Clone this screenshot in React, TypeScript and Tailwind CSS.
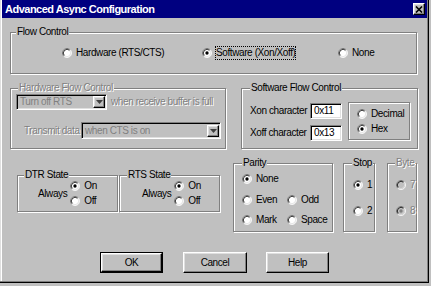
import React from 'react';

// Win95 style "Advanced Async Configuration" dialog

const disabledText = 'text-[#808080] [text-shadow:1px_1px_0_#ffffff]';
const sunken =
  'border border-t-[#808080] border-l-[#808080] border-r-white border-b-white shadow-[inset_1px_1px_0_#000000,inset_-1px_-1px_0_#dfdfdf]';
const raised =
  'border border-t-white border-l-white border-r-black border-b-black shadow-[inset_-1px_-1px_0_#808080,inset_1px_1px_0_#dfdfdf]';

function Radio({ checked = false, disabled = false }: { checked?: boolean; disabled?: boolean }) {
  return (
    <svg width="10" height="10" viewBox="0 0 12 12" className="shrink-0">
      <circle cx="6" cy="6" r="5" fill={disabled ? '#c0c0c0' : '#ffffff'} />
      <path d="M2.11 9.89A5.5 5.5 0 0 1 9.89 2.11" fill="none" stroke="#808080" />
      <path d="M9.89 2.11A5.5 5.5 0 0 1 2.11 9.89" fill="none" stroke="#ffffff" />
      <path d="M2.82 9.18A4.5 4.5 0 0 1 9.18 2.82" fill="none" stroke="#000000" />
      <path d="M9.18 2.82A4.5 4.5 0 0 1 2.82 9.18" fill="none" stroke="#dfdfdf" />
      {checked && <circle cx="6" cy="6" r="2" fill={disabled ? '#808080' : '#000000'} />}
    </svg>
  );
}

function Option({
  label,
  checked,
  disabled,
  focus,
  className = '',
}: {
  label: string;
  checked?: boolean;
  disabled?: boolean;
  focus?: boolean;
  className?: string;
}) {
  return (
    <div className={`flex items-center gap-[4px] h-[12px] ${className}`}>
      <Radio checked={checked} disabled={disabled} />
      <span
        className={`${disabled ? disabledText : ''} ${
          focus ? 'outline-1 outline-dotted outline-black outline-offset-0' : ''
        }`}
      >
        {label}
      </span>
    </div>
  );
}

function Group({
  label,
  labelClass = 'left-[5px]',
  disabled,
  className = '',
  children,
}: {
  label?: string;
  labelClass?: string;
  disabled?: boolean;
  className?: string;
  children?: React.ReactNode;
}) {
  return (
    <div
      className={`relative shrink-0 border border-[#808080] shadow-[inset_1px_1px_0_#ffffff,1px_1px_0_#ffffff] ${className}`}
    >
      {label && (
        <span
          className={`absolute -top-[7px] px-[1px] bg-[#c0c0c0] whitespace-nowrap ${labelClass} ${
            disabled ? disabledText : ''
          }`}
        >
          {label}
        </span>
      )}
      {children}
    </div>
  );
}

function Combo({ text, className = '' }: { text: string; className?: string }) {
  return (
    <div className={`flex items-center justify-between bg-[#c0c0c0] pr-[1px] ${sunken} ${className}`}>
      <span className="pl-[3px] text-[#808080] whitespace-nowrap">{text}</span>
      <span className={`flex items-center justify-center w-[12px] h-[12px] bg-[#c0c0c0] ${raised}`}>
        <svg width="7" height="4" viewBox="0 0 7 4">
          <path d="M0 0h7L3.5 4z" fill="#404040" />
        </svg>
      </span>
    </div>
  );
}

function Field({ value }: { value: string }) {
  return (
    <div className={`w-[32px] h-[16px] bg-white pl-[3px] leading-[14px] ${sunken}`}>{value}</div>
  );
}

function Button({ label, isDefault, className = '' }: { label: string; isDefault?: boolean; className?: string }) {
  const face = (
    <div className={`flex items-center justify-center w-full h-full bg-[#c0c0c0] ${raised}`}>{label}</div>
  );
  return (
    <div className={`h-[21px] shrink-0 ${isDefault ? 'border border-black' : ''} ${className}`}>{face}</div>
  );
}

export default function App() {
  return (
    <div className="w-[431px] h-[286px] bg-[#c0c0c0] font-['Liberation_Sans',Arial,sans-serif] text-[10px] leading-[12px] tracking-[-0.4px] text-black overflow-hidden">
      <div className="w-[429px] h-[283px] flex flex-col shadow-[inset_-1px_-1px_0_#000000,inset_-2px_-2px_0_#808080,inset_1px_0_0_#dfdfdf,inset_2px_0_0_#ffffff]">
        {/* Title bar */}
        <div className="ml-[2px] w-[425px] h-[18px] bg-[#000080] flex items-center justify-between pl-[3px] pr-[2px]">
          <span className="text-white font-bold text-[11px] tracking-[-0.5px]">Advanced Async Configuration</span>
          <span className={`flex items-center justify-center w-[12px] h-[12px] bg-[#c0c0c0] ${raised}`}>
            <svg width="8" height="7" viewBox="0 0 8 7">
              <path d="M1 0.5l6 6M7 0.5l-6 6" stroke="#000000" strokeWidth="1.6" />
            </svg>
          </span>
        </div>

        <div className="flex flex-col pl-[10px]">
          {/* Flow Control */}
          <Group label="Flow Control" labelClass="left-[5px]" className="mt-[14px] w-[407px] h-[42px]">
            <div className="flex items-center h-full pl-[51px]">
              <Option label="Hardware (RTS/CTS)" className="w-[140px]" />
              <Option label="Software (Xon/Xoff)" checked focus className="w-[136px]" />
              <Option label="None" />
            </div>
          </Group>

          {/* Hardware / Software flow control */}
          <div className="flex mt-[14px]">
            <Group label="Hardware Flow Control" labelClass="left-[7px]" disabled className="w-[216px] h-[61px]">
              <div className="flex flex-col pt-[5px] pl-[5px]">
                <div className="flex items-center">
                  <Combo text="Turn off RTS" className="w-[91px] h-[16px]" />
                  <span className={`ml-[4px] whitespace-nowrap ${disabledText}`}>when receive buffer is full</span>
                </div>
                <div className="flex items-center mt-[12px]">
                  <span className={`pl-[8px] w-[65px] whitespace-nowrap ${disabledText}`}>Transmit data</span>
                  <Combo text="when CTS is on" className="w-[140px] h-[17px]" />
                </div>
              </div>
            </Group>

            <Group label="Software Flow Control" labelClass="left-[8px]" className="ml-[15px] w-[177px] h-[61px]">
              <div className="flex items-start pt-[13px] pl-[8px]">
                <div className="flex flex-col gap-[6px] mt-[1px]">
                  <div className="flex items-center">
                    <span className="w-[60px] overflow-hidden whitespace-nowrap">Xon character</span>
                    <Field value="0x11" />
                  </div>
                  <div className="flex items-center">
                    <span className="w-[60px] overflow-hidden whitespace-nowrap">Xoff character</span>
                    <Field value="0x13" />
                  </div>
                </div>
                <Group className="ml-[6px] w-[62px] h-[38px]">
                  <div className="flex flex-col gap-[3px] pt-[5px] pl-[8px]">
                    <Option label="Decimal" />
                    <Option label="Hex" checked />
                  </div>
                </Group>
              </div>
            </Group>
          </div>

          {/* DTR / RTS state, parity, stop, byte */}
          <div className="flex items-start">
            <div className="flex mt-[26px] ml-[7px]">
              <Group label="DTR State" labelClass="left-[6px]" className="w-[101px] h-[37px]">
                <div className="flex items-center h-full pl-[20px]">
                  <span>Always</span>
                  <div className="flex flex-col gap-[3px] ml-[3px]">
                    <Option label="On" checked />
                    <Option label="Off" />
                  </div>
                </div>
              </Group>
              <Group label="RTS State" labelClass="left-[7px]" className="ml-[1px] w-[101px] h-[37px]">
                <div className="flex items-center h-full pl-[22px]">
                  <span>Always</span>
                  <div className="flex flex-col gap-[3px] ml-[3px]">
                    <Option label="On" checked />
                    <Option label="Off" />
                  </div>
                </div>
              </Group>
            </div>

            <div className="flex mt-[14px] ml-[13px]">
              <Group label="Parity" labelClass="left-[8px]" className="w-[100px] h-[69px]">
                <div className="flex flex-col pt-[9px] pl-[8px]">
                  <Option label="None" checked />
                  <div className="grid grid-cols-[45px_auto] gap-y-[8px] mt-[9px]">
                    <Option label="Even" />
                    <Option label="Odd" />
                    <Option label="Mark" />
                    <Option label="Space" />
                  </div>
                </div>
              </Group>
              <Group label="Stop" labelClass="left-[8px]" className="ml-[10px] w-[32px] h-[69px]">
                <div className="flex flex-col gap-[14px] pt-[15px] pl-[9px]">
                  <Option label="1" checked />
                  <Option label="2" />
                </div>
              </Group>
              <Group label="Byte" labelClass="left-[7px]" disabled className="ml-[12px] w-[30px] h-[69px]">
                <div className="flex flex-col gap-[14px] pt-[15px] pl-[8px]">
                  <Option label="7" disabled />
                  <Option label="8" checked disabled />
                </div>
              </Group>
            </div>
          </div>

          {/* Buttons */}
          <div className="flex mt-[20px] pl-[90px]">
            <Button label="OK" isDefault className="w-[63px]" />
            <Button label="Cancel" className="ml-[20px] w-[64px]" />
            <Button label="Help" className="ml-[19px] w-[63px]" />
          </div>
        </div>
      </div>
    </div>
  );
}
